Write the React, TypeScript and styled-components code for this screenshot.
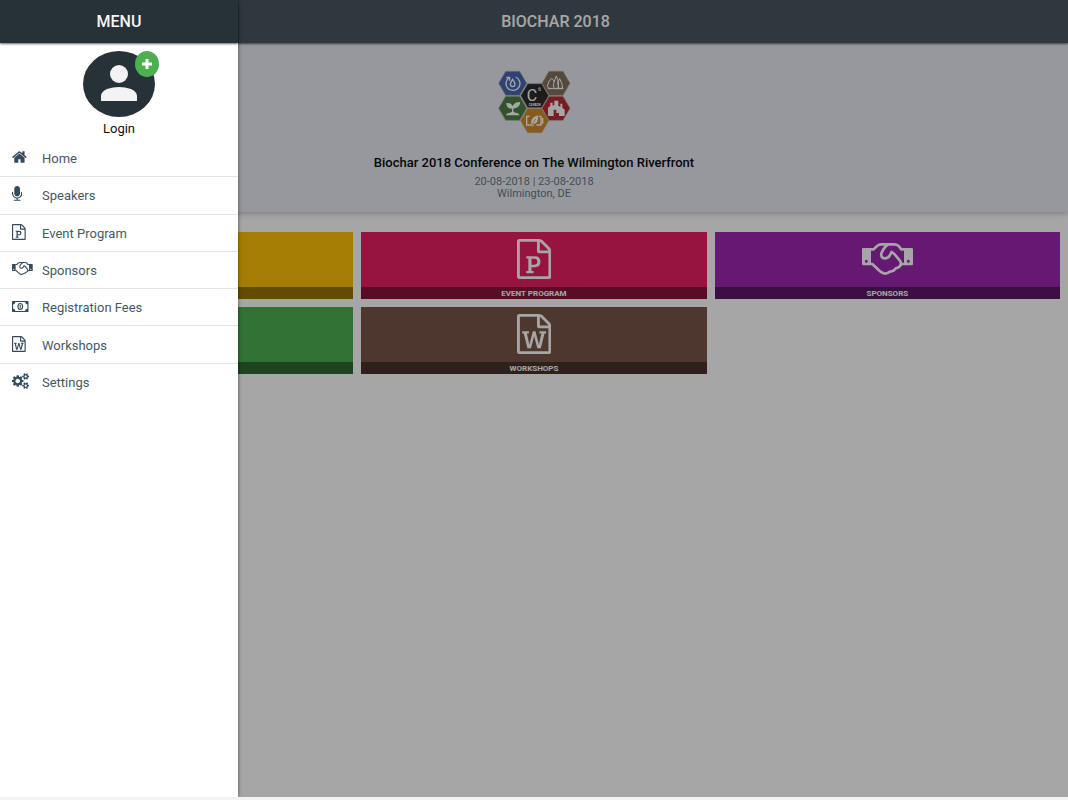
import React from "react";
import styled, { createGlobalStyle } from "styled-components";

const GlobalStyle = createGlobalStyle`
  *, *::before, *::after { box-sizing: border-box; }
  body {
    margin: 0;
    background: #f3f3f3;
    font-family: Roboto, "Liberation Sans", sans-serif;
  }
  h1, h2, p, ul { margin: 0; padding: 0; }
  ul { list-style: none; }
  a { color: inherit; text-decoration: none; }
`;

const Screen = styled.div`
  position: relative;
  display: flex;
  flex-direction: column;
  min-height: calc(100vh - 3px);
  background: #ffffff;
  box-shadow: 0 1px 1px #d4d4d4;
`;

const TopBar = styled.header<{ $tone: string; $ink: string; $lead?: number }>`
  display: flex;
  flex: none;
  align-items: center;
  justify-content: center;
  height: 43px;
  padding-left: ${(p) => p.$lead ?? 0}px;
  background: ${(p) => p.$tone};
  color: ${(p) => p.$ink};
  box-shadow: 0 1px 2px rgba(0, 0, 0, 0.6);
  z-index: 1;
`;

const BarTitle = styled.h1`
  font-size: 16px;
  line-height: 20px;
  font-weight: 500;
`;

const Hero = styled.section`
  display: flex;
  flex-direction: column;
  align-items: center;
  padding: 27px 16px 12px;
  background: #e8eaf2;
  box-shadow: 0 1px 6px rgba(0, 0, 0, 0.3);
  text-align: center;
`;

const HeroTitle = styled.h2`
  margin-top: 21px;
  margin-bottom: 5px;
  font-size: 13px;
  line-height: 16px;
  font-weight: 500;
  color: #0a0c10;
`;

const HeroText = styled.p`
  font-size: 11px;
  line-height: 12px;
  color: #607d8b;
`;

const Tiles = styled.nav`
  display: grid;
  grid-template-columns: repeat(3, 1fr);
  gap: 8px;
  padding: 20px 8px;
`;

const Tile = styled.a<{ $color: string }>`
  display: flex;
  flex-direction: column;
  height: 67px;
  background: ${(p) => p.$color};
  color: #ffffff;
`;

const TileIcon = styled.span`
  display: flex;
  flex: 1;
  align-items: center;
  justify-content: center;
  padding-bottom: 2px;
`;

const TileLabel = styled.span`
  height: 12px;
  background: rgba(0, 0, 0, 0.4);
  font-size: 8px;
  line-height: 14px;
  font-weight: 700;
  text-align: center;
`;

const Backdrop = styled.div`
  position: absolute;
  inset: 0;
  z-index: 2;
  background: rgba(0, 0, 0, 0.35);
`;

const Drawer = styled.aside`
  position: absolute;
  top: 0;
  bottom: 0;
  left: 0;
  z-index: 3;
  width: 238px;
  background: #ffffff;
  box-shadow: 0 0 4px rgba(0, 0, 0, 0.5);
`;

const Profile = styled.button`
  display: flex;
  flex-direction: column;
  align-items: center;
  width: 100%;
  padding: 8px 0 1px;
  border: 0;
  background: none;
  color: #111111;
  font-family: inherit;
  font-size: 13px;
  line-height: 20px;
`;

const Avatar = styled.span`
  position: relative;
  display: flex;
  align-items: center;
  justify-content: center;
  width: 72px;
  height: 66px;
  margin-bottom: 2px;
  padding-bottom: 3px;
  border-radius: 50%;
  background: #263238;
`;

const AddBadge = styled.span`
  position: absolute;
  top: 0;
  right: -4px;
  display: flex;
  align-items: center;
  justify-content: center;
  width: 24px;
  height: 26px;
  border-radius: 50%;
  background: #4caf50;
`;

const MenuList = styled.ul`
  display: grid;
  grid-auto-rows: 1fr;
  height: 261px;
`;

const MenuItem = styled.li`
  border-bottom: 1px solid #e4e4e4;
  &:last-child { border-bottom-color: transparent; }
`;

const MenuLink = styled.a`
  display: flex;
  align-items: center;
  height: 100%;
  padding-top: 2px;
  padding-left: 12px;
  font-size: 13px;
  line-height: 16px;
  color: #455a64;
`;

const MenuIcon = styled.span`
  display: flex;
  width: 30px;
  padding-bottom: 4px;
  color: #34495a;
`;

type IconProps = { size: number };

const Glyph = ({ d, box, size }: { d: string; box: string; size: number }) => (
  <svg viewBox={box} height={size} fill="currentColor" aria-hidden="true">
    <path d={d} />
  </svg>
);

const HomeIcon = ({ size }: IconProps) => (
  <Glyph size={size} box="64 0 1664 1792" d="M1472 992v480q0 26-19 45t-45 19h-384v-384h-256v384h-384q-26 0-45-19t-19-45v-480q0-1 .5-3t.5-3l575-474 575 474q1 2 1 6zm223-69l-62 74q-8 9-21 11h-3q-13 0-21-7l-692-577-692 577q-12 8-24 7-13-2-21-11l-62-74q-8-10-7-23.5t11-21.5l719-599q32-26 76-26t76 26l244 204v-195q0-14 9-23t23-9h192q14 0 23 9t9 23v408l219 182q10 8 11 21.5t-7 23.5z" />
);

const MicIcon = ({ size }: IconProps) => (
  <Glyph size={size} box="320 0 1152 1792" d="M1472 704v128q0 221-147.5 384.5t-364.5 187.5v132h256q26 0 45 19t19 45-19 45-45 19h-640q-26 0-45-19t-19-45 19-45 45-19h256v-132q-217-24-364.5-187.5t-147.5-384.5v-128q0-26 19-45t45-19 45 19 19 45v128q0 185 131.5 316.5t316.5 131.5 316.5-131.5 131.5-316.5v-128q0-26 19-45t45-19 45 19 19 45zm-256-384v512q0 132-94 226t-226 94-226-94-94-226v-512q0-132 94-226t226-94 226 94 94 226z" />
);

const SHEET =
  "M1596 380q28 28 48 76t20 88v1152q0 40-28 68t-68 28h-1344q-40 0-68-28t-28-68v-1600q0-40 28-68t68-28h896q40 0 88 20t76 48zm-444-244v376h376q-10-29-22-41l-313-313q-12-12-41-22zm384 1528v-1024h-416q-40 0-68-28t-28-68v-416h-768v1536h1280z";

const ProgramIcon = ({ size }: IconProps) => (
  <Glyph size={size} box="128 0 1536 1792" d={SHEET + "m-992-234v106h327v-106h-93v-167h137q76 0 118-15 67-23 106.5-87t39.5-146q0-81-37-141t-100-87q-48-19-130-19h-368v107h92v555h-92zm353-280h-119v-268h120q52 0 83 18 56 33 56 115 0 89-62 120-31 15-78 15z"} />
);

const WorkshopIcon = ({ size }: IconProps) => (
  <Glyph size={size} box="128 0 1536 1792" d={SHEET + "m-1175-896v107h70l164 661h159l128-485q7-20 10-46 2-16 2-24h4l3 24q1 3 3.5 20t5.5 26l128 485h159l164-661h70v-107h-300v107h90l-99 438q-5 20-7 46l-2 21h-4l-3-21q-1-5-4-21t-5-25l-144-545h-114l-144 545q-2 9-4.5 24.5t-3.5 21.5l-4 21h-4l-2-21q-2-26-7-46l-99-438h90v-107h-300z"} />
);

const MoneyIcon = ({ size }: IconProps) => (
  <svg viewBox="0 256 1920 1280" height={size} fill="currentColor" aria-hidden="true">
    <path d="M1792 1152v-512q-106 0-181-75t-75-181h-1152q0 106-75 181t-181 75v512q106 0 181 75t75 181h1152q0-106 75-181t181-75zm128-832v1152q0 26-19 45t-45 19h-1792q-26 0-45-19t-19-45v-1152q0-26 19-45t45-19h1792q26 0 45 19t19 45z" />
    <ellipse cx="960" cy="896" rx="270" ry="350" fill="none" stroke="currentColor" strokeWidth="130" />
    <path d="M890 700H1020V1092H900V800H850Z" />
  </svg>
);

const CogsIcon = ({ size }: IconProps) => (
  <Glyph size={size} box="0 0 1920 1792" d="M896 896q0-106-75-181t-181-75-181 75-75 181 75 181 181 75 181-75 75-181zm768 512q0-52-38-90t-90-38-90 38-38 90q0 53 37.5 90.5t90.5 37.5 90.5-37.5 37.5-90.5zm0-1024q0-52-38-90t-90-38-90 38-38 90q0 53 37.5 90.5t90.5 37.5 90.5-37.5 37.5-90.5zm-384 421v185q0 10-7 19.5t-16 10.5l-155 24q-11 35-32 76 34 48 90 115 7 11 7 20 0 12-7 19-23 30-82.5 89.5t-78.5 59.5q-11 0-21-7l-115-90q-37 19-77 31-11 108-23 155-7 24-30 24h-186q-11 0-20-7.5t-10-17.5l-23-153q-34-10-75-31l-118 89q-7 7-20 7-11 0-21-8-144-133-144-160 0-9 7-19 10-14 41-53t47-61q-23-44-35-82l-152-24q-10-1-17-9.5t-7-19.5v-185q0-10 7-19.5t16-10.5l155-24q11-35 32-76-34-48-90-115-7-11-7-20 0-12 7-20 22-30 82-89t79-59q11 0 21 7l115 90q34-18 77-32 11-108 23-154 7-24 30-24h186q11 0 20 7.5t10 17.5l23 153q34 10 75 31l118-89q8-7 20-7 11 0 21 8 144 133 144 160 0 8-7 19-12 16-42 54t-45 60q23 48 34 82l152 23q10 2 17 10.5t7 19.5zm640 533v140q0 16-149 31-12 27-30 52 51 113 51 138 0 4-4 7-122 71-124 71-8 0-46-47t-52-68q-20 2-30 2t-30-2q-14 21-52 68t-46 47q-2 0-124-71-4-3-4-7 0-25 51-138-18-25-30-52-149-15-149-31v-140q0-16 149-31 13-29 30-52-51-113-51-138 0-4 4-7 4-2 35-20t59-34 30-16q8 0 46 46.5t52 67.5q20-2 30-2t30 2q51-71 92-112l6-2q4 0 124 70 4 3 4 7 0 25-51 138 17 23 30 52 149 15 149 31zm0-1024v140q0 16-149 31-12 27-30 52 51 113 51 138 0 4-4 7-122 71-124 71-8 0-46-47t-52-68q-20 2-30 2t-30-2q-14 21-52 68t-46 47q-2 0-124-71-4-3-4-7 0-25 51-138-18-25-30-52-149-15-149-31v-140q0-16 149-31 13-29 30-52-51-113-51-138 0-4 4-7 4-2 35-20t59-34 30-16q8 0 46 46.5t52 67.5q20-2 30-2t30 2q51-71 92-112l6-2q4 0 124 70 4 3 4 7 0 25-51 138 17 23 30 52 149 15 149 31z" />
);

const HandshakeIcon = ({ size }: IconProps) => (
  <svg viewBox="0 0 153 96" height={size} fill="none" stroke="currentColor" strokeWidth="8" strokeLinejoin="round" aria-hidden="true">
    <path fill="currentColor" stroke="none" fillRule="evenodd" d="M4 15H27V67H4Q0 67 0 63V19Q0 15 4 15ZM13 50A4.500 4.500 0 1 0 13 59A4.500 4.500 0 1 0 13 50Z" />
    <path fill="currentColor" stroke="none" fillRule="evenodd" d="M126 15H149Q153 15 153 19V63Q153 67 149 67H126ZM139 50A4.500 4.500 0 1 0 139 59A4.500 4.500 0 1 0 139 50Z" />
    <path d="M26 19H35L45 9Q51 4 58 4H96Q104 4 110 9L118 19H128" />
    <path d="M26 63H31L53 84Q68 98 84 86L94 83 102 76 110 73 119 63H128" />
    <path d="M78 5Q69 10 63 21L58 31Q56 45 68 46Q79 46 83 38L89 27L97 33L113 52Q119 59 115 67" />
  </svg>
);

const Hex = ({ x, y, fill }: { x: number; y: number; fill: string }) => (
  <path transform={`translate(${x} ${y})`} d="M-42 0L-21-36H21L42 0L21 36H-21Z" fill={fill} stroke="#b5a893" strokeWidth="2" />
);

const EventLogo = () => (
  <svg width="73" height="64" viewBox="38 32 219 192" role="img" aria-label="Carbon hexagons">
    <Hex x={82} y={72} fill="#4966b5" />
    <Hex x={212} y={72} fill="#83705f" />
    <Hex x={82} y={147} fill="#4a8048" />
    <Hex x={212} y={147} fill="#b92c35" />
    <Hex x={148} y={184} fill="#d38d28" />
    <Hex x={148} y={109} fill="#2b2b2d" />
    <g fill="none" stroke="#ffffff" strokeWidth="4">
      <path d="M71 55A21 21 0 1 0 91 53M63 54H73V64M82 60Q74 71 75 76Q76 82 82 82Q88 82 89 76Q90 71 82 60Z" />
      <path d="M198 87Q184 88 187 77Q190 64 199 57Q205 62 207 68M206 87Q201 75 213 50Q223 74 218 87ZM220 87L217 70 223 58Q231 71 232 87ZM187 88H234" strokeWidth="3" />
      <path d="M82 163V143" />
      <path d="M133 171H124V197H145M153 197H167V171H160M168 178H172V191H168" />
    </g>
    <g fill="#ffffff">
      <path d="M82 148Q63 149 63 131Q79 130 82 141Q87 127 105 128Q103 147 82 148ZM61 168Q65 159 75 160Q82 154 90 160Q100 159 103 168Z" />
      <path d="M188 170V145L195 140V130H202V140L207 136V124H219V139L225 143V133H231V145L238 151V170Z" />
      <path d="M139 198Q132 175 158 168Q160 193 145 194L140 204Z" />
      <path d="M205 170V151H213V161H221V170Z" fill="#b92c35" />
    </g>
    <path d="M140 200Q144 187 151 179" fill="none" stroke="#d38d28" strokeWidth="2" />
    <g fill="#ffffff" fontFamily="Roboto, sans-serif" textAnchor="middle">
      <text x="140" y="126" fontSize="48">C</text>
      <text x="163" y="96" fontSize="17">6</text>
      <text x="148" y="139" fontSize="9" fontWeight="700">CARBON</text>
    </g>
  </svg>
);

const tiles = [
  { label: "SPEAKERS", color: "#ffc107", icon: <MicIcon size={40} /> },
  { label: "EVENT PROGRAM", color: "#e91e63", icon: <ProgramIcon size={40} /> },
  { label: "SPONSORS", color: "#9c27b0", icon: <HandshakeIcon size={32} /> },
  { label: "REGISTRATION FEES", color: "#4caf50", icon: <MoneyIcon size={32} /> },
  { label: "WORKSHOPS", color: "#795548", icon: <WorkshopIcon size={40} /> },
];

const menu = [
  { label: "Home", icon: <HomeIcon size={16} /> },
  { label: "Speakers", icon: <MicIcon size={16} /> },
  { label: "Event Program", icon: <ProgramIcon size={16} /> },
  { label: "Sponsors", icon: <HandshakeIcon size={13} /> },
  { label: "Registration Fees", icon: <MoneyIcon size={11} /> },
  { label: "Workshops", icon: <WorkshopIcon size={16} /> },
  { label: "Settings", icon: <CogsIcon size={16} /> },
];

export default function App() {
  return (
    <>
      <GlobalStyle />
      <Screen>
        <TopBar $tone="#4b5762" $ink="#ffffff" $lead={43}>
          <BarTitle>BIOCHAR 2018</BarTitle>
        </TopBar>
        <Hero>
          <EventLogo />
          <HeroTitle>Biochar 2018 Conference on The Wilmington Riverfront</HeroTitle>
          <HeroText>20-08-2018 | 23-08-2018</HeroText>
          <HeroText>Wilmington, DE</HeroText>
        </Hero>
        <Tiles aria-label="Sections">
          {tiles.map((t) => (
            <Tile key={t.label} href="#" $color={t.color}>
              <TileIcon>{t.icon}</TileIcon>
              <TileLabel>{t.label}</TileLabel>
            </Tile>
          ))}
        </Tiles>
        <Backdrop />
        <Drawer>
          <TopBar $tone="#263238" $ink="#f5f5f5">
            <BarTitle>MENU</BarTitle>
          </TopBar>
          <Profile type="button">
            <Avatar>
              <svg width="36" height="36" viewBox="0 0 36 36" fill="#f3f3f3" aria-hidden="true">
                <circle cx="18" cy="9" r="9" />
                <path d="M0 36V31Q0 27 6 24Q12 22 18 22Q24 22 30 24Q36 27 36 31V36Z" />
              </svg>
              <AddBadge>
                <svg width="10" height="10" viewBox="0 0 10 10" stroke="#ffffff" strokeWidth="3" aria-hidden="true">
                  <path d="M5 0V10M0 5H10" />
                </svg>
              </AddBadge>
            </Avatar>
            Login
          </Profile>
          <MenuList>
            {menu.map((m) => (
              <MenuItem key={m.label}>
                <MenuLink href="#">
                  <MenuIcon>{m.icon}</MenuIcon>
                  {m.label}
                </MenuLink>
              </MenuItem>
            ))}
          </MenuList>
        </Drawer>
      </Screen>
    </>
  );
}
